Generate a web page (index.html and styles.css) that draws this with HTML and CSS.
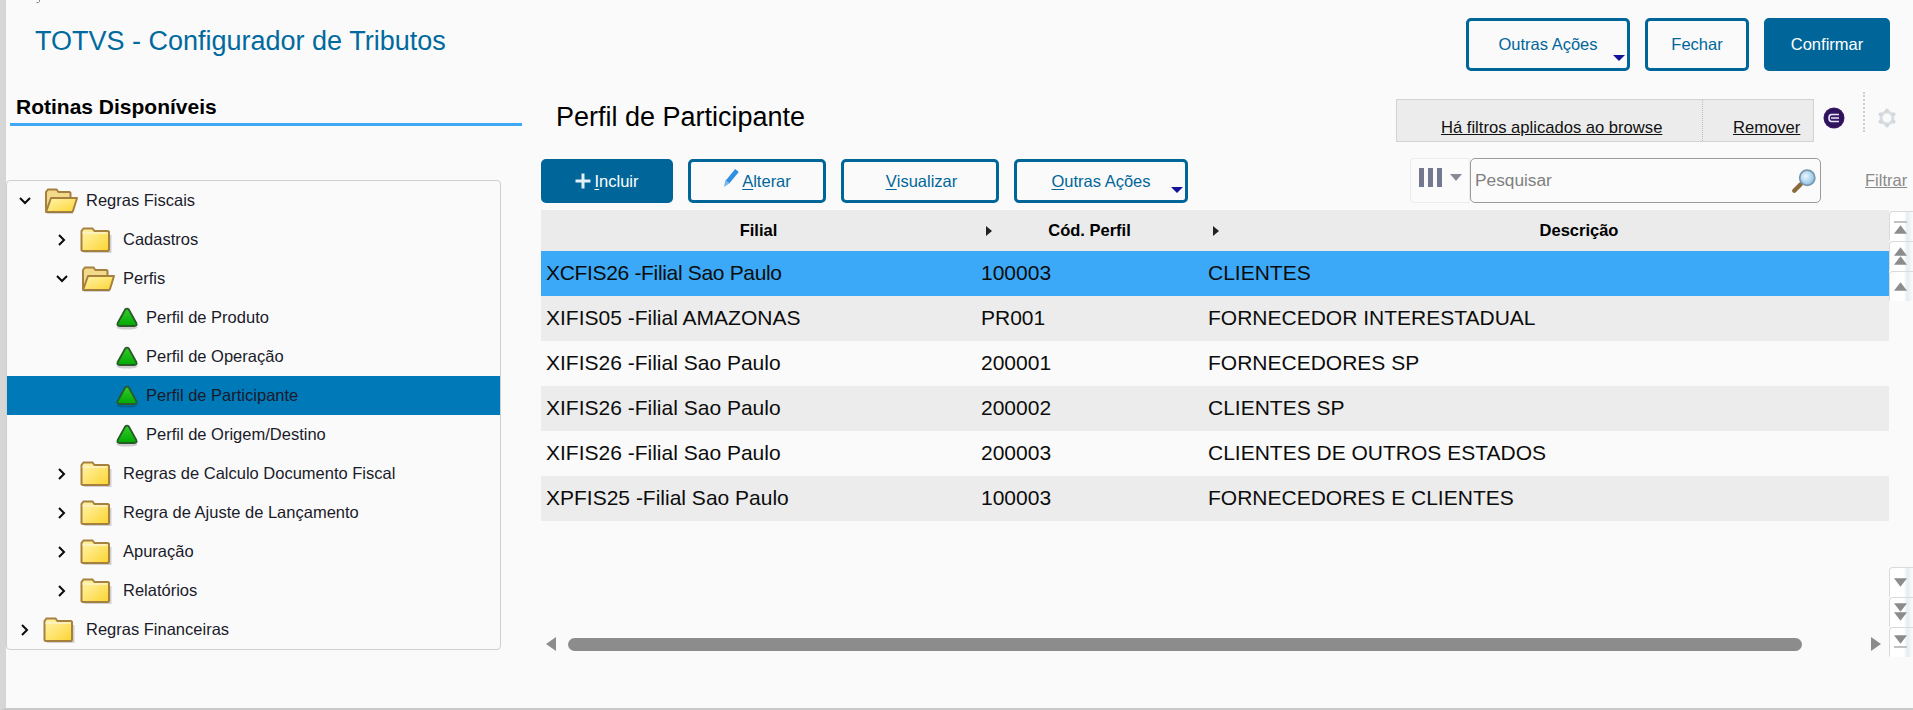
FILE: index.html
```html
<!DOCTYPE html>
<html lang="pt-BR">
<head>
<meta charset="utf-8">
<title>TOTVS - Configurador de Tributos</title>
<link rel="stylesheet" href="styles.css">
</head>
<body>
<svg class="defs" width="0" height="0" aria-hidden="true">
  <defs>
    <linearGradient id="fy" x1="0" y1="0" x2="1" y2="1"><stop offset="0" stop-color="#fff4b0"/><stop offset=".45" stop-color="#ffe677"/><stop offset="1" stop-color="#fad52f"/></linearGradient>
    <linearGradient id="gr" x1="0" y1="0" x2="0" y2="1"><stop offset="0" stop-color="#35cc2c"/><stop offset="1" stop-color="#00a800"/></linearGradient>
    <symbol id="folder" viewBox="0 0 32 27">
      <path d="M3 26h27V8H15l-2-3H4L2 7v18z" fill="#000" opacity=".16" transform="translate(1.500 1)"/>
      <path d="M1.500 24V5l2-2.500h9l2 2.500h13.500l1 1v18l-1 1H2.500z" fill="url(#fy)" stroke="#a5803f" stroke-width="2"/>
      <path d="M2.500 7h25" stroke="#fbf3cc" stroke-width="1.400"/>
    </symbol>
    <symbol id="folder-open" viewBox="0 0 36 27">
      <path d="M3 24V5l2-2.500h8.500l2 2.500h11l1 1v5" fill="#f3d98a" stroke="#a5803f" stroke-width="2"/>
      <path d="M3 25l5-14h26l-4 13-1 1z" fill="url(#fy)" stroke="#a5803f" stroke-width="2" stroke-linejoin="round"/>
      <path d="M4 26.300h26" stroke="#000" stroke-width="1.200" opacity=".16"/>
    </symbol>
    <symbol id="leaf" viewBox="0 0 24 24">
      <ellipse cx="12" cy="21.500" rx="10.500" ry="2" fill="#000" opacity=".18"/>
      <path d="M10.200 3.500q1.800-1.800 3.600 0l7.500 13.500q1.300 3-2 3H4.700q-3.300 0-2-3z" fill="url(#gr)" stroke="#2a5a2a" stroke-width="1.800" stroke-linejoin="round"/>
    </symbol>
    <symbol id="chev-r" viewBox="0 0 10 14"><path d="M2 2l5 5-5 5" fill="none" stroke="#0a0a0a" stroke-width="2"/></symbol>
    <symbol id="chev-d" viewBox="0 0 14 10"><path d="M2 2l5 5 5-5" fill="none" stroke="#0a0a0a" stroke-width="2"/></symbol>
    <symbol id="tri-up" viewBox="0 0 12 8"><path d="M6 0l6 8H0z" fill="#8c8c8c"/></symbol>
    <symbol id="tri-down" viewBox="0 0 12 8"><path d="M0 0h12L6 8z" fill="#8c8c8c"/></symbol>
  </defs>
</svg>
<svg class="stray" viewBox="0 0 6 4"><path d="M5 0v1.500q-.5 1.500-3 1.200" fill="none" stroke="#777" stroke-width=".9"/></svg>
<div class="app">
  <header class="top">
    <h1 class="app-title">TOTVS - Configurador de Tributos</h1>
    <div class="top-actions">
      <button class="btn btn-outline btn-top btn-more btn-w164">Outras Ações<span class="caret"></span></button>
      <button class="btn btn-outline btn-top btn-w104">Fechar</button>
      <button class="btn btn-solid btn-top btn-w126">Confirmar</button>
    </div>
  </header>
  <div class="content">
    <aside class="side">
      <h2 class="side-title">Rotinas Disponíveis</h2>
      <ul class="tree">
        <li class="node lv0"><svg class="chev"><use href="#chev-d"/></svg><svg class="fo"><use href="#folder-open"/></svg><span>Regras Fiscais</span></li>
        <li class="node lv1"><svg class="chev"><use href="#chev-r"/></svg><svg class="fc"><use href="#folder"/></svg><span>Cadastros</span></li>
        <li class="node lv1"><svg class="chev"><use href="#chev-d"/></svg><svg class="fo"><use href="#folder-open"/></svg><span>Perfis</span></li>
        <li class="node lv2"><svg class="lf"><use href="#leaf"/></svg><span>Perfil de Produto</span></li>
        <li class="node lv2"><svg class="lf"><use href="#leaf"/></svg><span>Perfil de Operação</span></li>
        <li class="node lv2 sel"><svg class="lf"><use href="#leaf"/></svg><span>Perfil de Participante</span></li>
        <li class="node lv2"><svg class="lf"><use href="#leaf"/></svg><span>Perfil de Origem/Destino</span></li>
        <li class="node lv1"><svg class="chev"><use href="#chev-r"/></svg><svg class="fc"><use href="#folder"/></svg><span>Regras de Calculo Documento Fiscal</span></li>
        <li class="node lv1"><svg class="chev"><use href="#chev-r"/></svg><svg class="fc"><use href="#folder"/></svg><span>Regra de Ajuste de Lançamento</span></li>
        <li class="node lv1"><svg class="chev"><use href="#chev-r"/></svg><svg class="fc"><use href="#folder"/></svg><span>Apuração</span></li>
        <li class="node lv1"><svg class="chev"><use href="#chev-r"/></svg><svg class="fc"><use href="#folder"/></svg><span>Relatórios</span></li>
        <li class="node lv0"><svg class="chev"><use href="#chev-r"/></svg><svg class="fc"><use href="#folder"/></svg><span>Regras Financeiras</span></li>
      </ul>
    </aside>
    <main class="main">
      <div class="head-row">
        <h2 class="page-title">Perfil de Participante</h2>
        <div class="filter-box">
          <a class="filter-msg">Há filtros aplicados ao browse</a>
          <a class="filter-rm">Remover</a>
        </div>
        <svg class="orb" viewBox="0 0 22 22"><defs><radialGradient id="og" cx=".5" cy=".5" r=".55"><stop offset="0" stop-color="#3c1a70"/><stop offset=".75" stop-color="#2a1258"/><stop offset="1" stop-color="#5a1e80"/></radialGradient></defs><circle cx="11" cy="11" r="10.500" fill="url(#og)"/><path d="M16 7.500H8.500Q6 7.500 6 11t2.500 3.500H16M8 11h8" fill="none" stroke="#e8e4f4" stroke-width="1.600"/></svg>
        <span class="dots"></span>
        <svg class="gear" viewBox="0 0 20 20"><circle cx="10" cy="10" r="6" fill="none" stroke="#d8dde2" stroke-width="3"/><g fill="#d2d7dc"><circle cx="10" cy="2.500" r="2"/><circle cx="10" cy="17.500" r="2"/><circle cx="3.500" cy="6.200" r="2"/><circle cx="16.500" cy="6.200" r="2"/><circle cx="3.500" cy="13.800" r="2"/><circle cx="16.500" cy="13.800" r="2"/></g></svg>
      </div>
      <div class="tool-row">
        <div class="tools">
          <button class="btn btn-solid btn-tool btn-w132"><svg class="plus" viewBox="0 0 16 16"><path d="M8 .500v15M.5 8h15" stroke="#e4f0f8" stroke-width="3"/></svg><u>I</u>ncluir</button>
          <button class="btn btn-outline btn-tool btn-w138"><svg class="pencil" viewBox="0 0 16 19"><path d="M14 1.500L4.500 13" stroke="#2f8fe0" stroke-width="4.600"/><path d="M2.300 11.300l3.900 3.100L1 18z" fill="#7ab6ea"/></svg><u>A</u>lterar</button>
          <button class="btn btn-outline btn-tool btn-w158 btn-nudge"><u>V</u>isualizar</button>
          <button class="btn btn-outline btn-tool btn-more btn-w174"><u>O</u>utras Ações<span class="caret"></span></button>
        </div>
        <div class="search-group">
          <button class="col-btn"><span class="bars"><i></i><i></i><i></i></span><span class="col-caret"></span></button>
          <label class="search">
            <span class="placeholder">Pesquisar</span>
            <svg class="magnifier" viewBox="0 0 24 24"><defs><radialGradient id="gl" cx=".4" cy=".4" r=".7"><stop offset="0" stop-color="#eaf8ff"/><stop offset="1" stop-color="#7fb8e0"/></radialGradient></defs><path d="M9 15l-6 6" stroke="#8a6a3a" stroke-width="4" stroke-linecap="round"/><circle cx="15" cy="9" r="7" fill="url(#gl)" stroke="#7a97ad" stroke-width="1.600"/></svg>
          </label>
          <a class="filter-link">Filtrar</a>
        </div>
      </div>
      <div class="grid-wrap">
        <div class="grid-area">
          <div class="grid">
            <div class="row row-head">
              <div class="cell">Filial</div>
              <div class="cell"><span class="sort"></span>Cód. Perfil</div>
              <div class="cell"><span class="sort"></span>Descrição</div>
            </div>
            <div class="row row-sel"><div class="cell">XCFIS26 -Filial Sao Paulo</div><div class="cell">100003</div><div class="cell">CLIENTES</div></div>
            <div class="row row-alt"><div class="cell">XIFIS05 -Filial AMAZONAS</div><div class="cell">PR001</div><div class="cell">FORNECEDOR INTERESTADUAL</div></div>
            <div class="row"><div class="cell">XIFIS26 -Filial Sao Paulo</div><div class="cell">200001</div><div class="cell">FORNECEDORES SP</div></div>
            <div class="row row-alt"><div class="cell">XIFIS26 -Filial Sao Paulo</div><div class="cell">200002</div><div class="cell">CLIENTES SP</div></div>
            <div class="row"><div class="cell">XIFIS26 -Filial Sao Paulo</div><div class="cell">200003</div><div class="cell">CLIENTES DE OUTROS ESTADOS</div></div>
            <div class="row row-alt"><div class="cell">XPFIS25 -Filial Sao Paulo</div><div class="cell">100003</div><div class="cell">FORNECEDORES E CLIENTES</div></div>
          </div>
          <div class="hbar">
            <span class="arr-l"></span>
            <span class="thumb"></span>
            <span class="arr-r"></span>
          </div>
        </div>
        <div class="vbar">
          <div class="vgroup">
            <span class="vbtn"><b class="line"></b><svg class="t"><use href="#tri-up"/></svg></span>
            <span class="vbtn"><svg class="t"><use href="#tri-up"/></svg><svg class="t"><use href="#tri-up"/></svg></span>
            <span class="vbtn"><svg class="t"><use href="#tri-up"/></svg></span>
          </div>
          <div class="vgroup">
            <span class="vbtn"><svg class="t"><use href="#tri-down"/></svg></span>
            <span class="vbtn"><svg class="t"><use href="#tri-down"/></svg><svg class="t"><use href="#tri-down"/></svg></span>
            <span class="vbtn"><svg class="t"><use href="#tri-down"/></svg><b class="line"></b></span>
          </div>
        </div>
      </div>
    </main>
  </div>
</div>
</body>
</html>
```
FILE: styles.css
```css
* { box-sizing: border-box; }
html, body { margin: 0; padding: 0; height: 100%; overflow: hidden; }
body { font-family: "Liberation Sans", Arial, sans-serif; background: #fafafa; color: #111; }
.defs { position: absolute; }
.stray { position: absolute; left: 34px; top: 0; width: 7px; height: 4px; }
.app { width: 1913px; height: 710px; display: flex; flex-direction: column; background: #fafafa; border-left: 6px solid #d5d6d5; border-bottom: 2px solid #c9c9c9; }

/* header */
.top { height: 89px; flex: none; display: flex; justify-content: space-between; align-items: flex-start; padding: 18px 23px 0 29px; }
.app-title { margin: 8px 0 0; font-size: 27px; line-height: 30px; font-weight: 400; color: #006a9e; }
.top-actions { display: flex; gap: 15px; }

/* buttons */
.btn { position: relative; font: 16.500px "Liberation Sans", Arial, sans-serif; border-radius: 5px; cursor: pointer; display: flex; align-items: center; justify-content: center; padding: 0; }
.btn-outline { background: #fafafa; border: 3px solid #00669a; color: #00669a; }
.btn-solid { background: #00669a; border: 3px solid #00669a; color: #fff; }
.btn-top { height: 53px; }
.btn-tool { height: 44px; }
.btn-nudge { padding-left: 3px; }
.btn-w164 { width: 164px; }
.btn-w104 { width: 104px; }
.btn-w126 { width: 126px; }
.btn-w132 { width: 132px; }
.btn-w138 { width: 138px; }
.btn-w158 { width: 158px; }
.btn-w174 { width: 174px; }
.btn u { text-underline-offset: 2px; }
.caret { position: absolute; right: 2px; bottom: 7px; width: 0; height: 0; border-left: 6px solid transparent; border-right: 6px solid transparent; border-top: 6px solid #12129a; }
.plus { width: 16px; height: 16px; margin: -1px 3px 0 0; }
.pencil { width: 16px; height: 19px; margin: -5px 3px 0 0; }

/* layout */
.content { flex: 1; display: flex; gap: 19px; min-height: 0; }
.side { width: 516px; flex: none; }
.side-title { margin: 0 0 0 4px; height: 37px; padding: 6px 0 0 6px; font-size: 21px; line-height: 24px; font-weight: 700; color: #000; border-bottom: 3px solid #3fa9f5; }
.tree { list-style: none; margin: 54px 21px 0 0; padding: 0; border: 1px solid #cfcfcf; border-radius: 4px; overflow: hidden; }
.node { height: 39px; display: flex; align-items: center; font-size: 16.500px; color: #1a1a2a; position: relative; }
.node.sel { background: #0079b8; }
.lv0 { padding-left: 11px; }
.lv1 { padding-left: 48px; }
.lv2 { padding-left: 108px; }
.chev { width: 14px; height: 14px; flex: none; margin-right: 11px; }
.fc { width: 32px; height: 27px; flex: none; margin-right: 11px; }
.fo { width: 36px; height: 27px; flex: none; margin-right: 7px; }
.lf { width: 24px; height: 24px; flex: none; margin-right: 7px; }

/* main */
.main { flex: 1; display: flex; flex-direction: column; min-width: 0; }
.head-row { height: 70px; flex: none; display: flex; align-items: flex-start; padding-right: 16px; }
.page-title { margin: 13px auto 0 15px; font-size: 27px; line-height: 30px; font-weight: 400; color: #000; }
.filter-box { width: 418px; height: 43px; margin-top: 10px; display: flex; background: #ececec; border: 1px solid #d2d2d2; font-size: 16.600px; color: #111; }
.filter-box a { text-decoration: underline; align-self: flex-end; line-height: 20px; padding-bottom: 3px; }
.filter-msg { width: 306px; height: 100%; padding-left: 44px; border-right: 1px dotted #bbb; display: flex; align-items: flex-end; }
.filter-rm { padding-left: 30px; }
.orb { width: 22px; height: 22px; flex: none; margin: 18px 0 0 9px; }
.dots { width: 0; height: 40px; margin: 3px 0 0 18px; border-left: 2px dotted #cfcfcf; }
.gear { width: 20px; height: 20px; flex: none; margin: 19px 0 0 12px; }

.tool-row { height: 51px; flex: none; display: flex; align-items: flex-start; justify-content: space-between; padding-right: 5px; }
.tools { display: flex; gap: 15px; }
.search-group { display: flex; align-items: flex-start; }
.col-btn { width: 60px; height: 45px; padding: 0 0 0 8px; background: #fbfbfb; border: 1px solid #ececec; border-radius: 4px 0 0 4px; display: flex; align-items: center; gap: 8px; margin-top: -1px; }
.bars { display: flex; gap: 4px; margin-bottom: 6px; }
.bars i { display: block; width: 5px; height: 19px; background: #757990; }
.col-caret { width: 0; height: 0; border-left: 6px solid transparent; border-right: 6px solid transparent; border-top: 7px solid #8a8a96; margin-bottom: 6px; }
.search { width: 351px; height: 45px; margin-top: -1px; border: 1px solid #9a9a9a; border-radius: 5px; background: #fbfbfb; display: flex; align-items: center; justify-content: space-between; padding: 0 3px 0 4px; }
.placeholder { font-size: 17.300px; color: #808080; }
.magnifier { width: 26px; height: 26px; }
.filter-link { margin: 12px 0 0 44px; width: 43px; font-size: 16.500px; color: #8a8a8a; text-decoration: underline; }

/* grid */
.grid-wrap { flex: none; height: 447px; display: flex; }
.grid-area { width: 1348px; flex: none; display: flex; flex-direction: column; overflow: hidden; padding-bottom: 6px; }
.grid { flex: 1; min-height: 0; overflow: hidden; }
.row { display: grid; grid-template-columns: 435px 227px 752px; height: 45px; align-items: center; font-size: 21px; color: #0c0c0c; }
.row .cell { padding: 0 0 2px 5px; white-space: nowrap; }
.row-head { height: 41px; background: #ebebeb; font-size: 16.500px; font-weight: 700; color: #000; }
.row-head .cell { position: relative; padding: 0; text-align: center; }
.sort { position: absolute; left: 10px; top: 50%; margin-top: -5px; width: 0; height: 0; border-top: 5px solid transparent; border-bottom: 5px solid transparent; border-left: 6px solid #222; }
.row-sel { background: #3ba9f7; }
.row-sel .cell:first-child { letter-spacing: -.33px; }
.row-alt { background: #ececec; }

.hbar { height: 14px; flex: none; display: flex; align-items: center; padding: 0 8px 0 5px; }
.thumb { flex: 1; height: 13px; border-radius: 7px; background: #8c8c8c; margin: 0 69px 0 12px; }
.arr-l, .arr-r { width: 0; height: 0; border-top: 7px solid transparent; border-bottom: 7px solid transparent; }
.arr-l { border-right: 10px solid #8c8c8c; }
.arr-r { border-left: 10px solid #8c8c8c; }

.vbar { width: 24px; flex: none; display: flex; flex-direction: column; justify-content: space-between; padding-top: 1px; height: 447px; }
.vgroup { display: flex; flex-direction: column; }
.vbtn { width: 24px; height: 30px; background: linear-gradient(90deg, #fff 0 60%, #e4eef2 75%, #fafafa); border: 1px solid #dadada; border-right: 0; border-bottom-color: transparent; border-radius: 4px 0 0 0; display: flex; flex-direction: column; align-items: center; justify-content: center; padding-right: 3px; }
.vbtn .t { width: 13px; height: 9px; display: block; }
.vbtn .line { display: block; width: 13px; height: 2px; background: #c2c2c2; margin: 2px 0; }
```
